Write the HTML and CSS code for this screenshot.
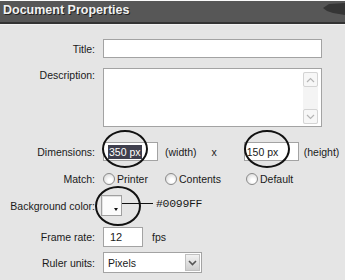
FILE: index.html
```html
<!DOCTYPE html>
<html lang="en">
<head>
    <meta charset="UTF-8" />
    <title>Document Properties</title>
    <link rel="stylesheet" href="styles.css">
</head>
<body>
    <div class="dialog">
        <div class="titlebar">
            <span class="titlebar-text">Document Properties</span>
            <svg class="pointer" width="22" height="14" viewBox="0 0 22 14">
                <path d="M0 6 L6 2 L22 1 L22 13 L10 11 L4 9 Z" fill="#353535" />
            </svg>
        </div>

        <div class="form">
            <!-- Title -->
            <div class="row row-title">
                <span class="label">Title:</span>
                <div class="field field-title"></div>
            </div>

            <!-- Description -->
            <div class="row row-desc">
                <span class="label label-top">Description:</span>
                <div class="field field-desc">
                    <div class="scrollbar">
                        <span class="scroll-btn">
                            <svg width="9" height="6" viewBox="0 0 9 6"><path d="M1 5 L4.5 1.5 L8 5" fill="none" stroke="#b5b5b5" stroke-width="1.2" /></svg>
                        </span>
                        <span class="scroll-track"></span>
                        <span class="scroll-btn">
                            <svg width="9" height="6" viewBox="0 0 9 6"><path d="M1 1 L4.5 4.5 L8 1" fill="none" stroke="#b5b5b5" stroke-width="1.2" /></svg>
                        </span>
                    </div>
                </div>
            </div>

            <!-- Dimensions -->
            <div class="row row-dims">
                <span class="label">Dimensions:</span>
                <div class="field field-dim">
                    <span class="selected">350 px</span>
                    <span class="ring ring-width"></span>
                </div>
                <span class="unit unit-width">(width)</span>
                <span class="times">x</span>
                <div class="field field-dim field-dim-2">
                    <span>150 px</span>
                    <span class="ring ring-height"></span>
                </div>
                <span class="unit unit-height">(height)</span>
            </div>

            <!-- Match -->
            <div class="row row-match">
                <span class="label">Match:</span>
                <div class="choices">
                    <span class="choice"><span class="radio"></span>Printer</span>
                    <span class="choice"><span class="radio"></span>Contents</span>
                    <span class="choice"><span class="radio"></span>Default</span>
                </div>
            </div>

            <!-- Background color -->
            <div class="row row-bg">
                <span class="label">Background color:</span>
                <div class="swatch">
                    <span class="swatch-arrow"></span>
                    <span class="ring ring-color"></span>
                </div>
                <span class="leader"></span>
                <span class="hex">#0099FF</span>
            </div>

            <!-- Frame rate -->
            <div class="row row-fps">
                <span class="label">Frame rate:</span>
                <div class="field field-fps">12</div>
                <span class="unit unit-fps">fps</span>
            </div>

            <!-- Ruler units -->
            <div class="row row-ruler">
                <span class="label">Ruler units:</span>
                <div class="field field-select">
                    <span class="select-value">Pixels</span>
                    <span class="select-btn">
                        <svg width="9" height="6" viewBox="0 0 9 6"><path d="M1 1 L4.5 4.5 L8 1" fill="none" stroke="#555" stroke-width="1.6" /></svg>
                    </span>
                </div>
            </div>
        </div>
    </div>
</body>
</html>
```

FILE: styles.css
```css
* {
    margin: 0;
    padding: 0;
    box-sizing: border-box;
}

body {
    background-color: #e5e5e5;
    color: #1a1a1a;
    font-family: "Liberation Sans", Arial, sans-serif;
    font-size: 10.5px;
    width: 345px;
    height: 280px;
    overflow: hidden;
}

.dialog {
    border-top: 1px solid #fafafa;
}

/* Title bar */

.titlebar {
    position: relative;
    height: 23px;
    background-color: #575757;
    border-bottom: 2px solid #333;
    box-shadow: 0 1px 0 #f2f2f2;
    padding: 2px 0 0 3px;
}

.titlebar-text {
    color: #f2f2f2;
    font-size: 12.5px;
    font-weight: bold;
    text-shadow: 1px 1px 0 #222;
}

.pointer {
    position: absolute;
    right: 0;
    top: 1px;
}

/* Form rows */

.form {
    display: flex;
    flex-direction: column;
    padding-top: 15px;
}

.row {
    display: flex;
    align-items: center;
}

.label {
    width: 95px;
    margin-right: 8px;
    text-align: right;
    flex-shrink: 0;
}

.label-top {
    align-self: flex-start;
    padding-top: 1px;
}

.row-title { height: 19px; }
.row-desc { height: 59px; margin-top: 10px; }
.row-dims { height: 19px; margin-top: 15px; }
.row-match { height: 13px; margin-top: 11px; }
.row-bg { height: 21px; margin-top: 10px; }
.row-fps { height: 20px; margin-top: 11px; }
.row-ruler { height: 21px; margin-top: 5px; }

.field {
    position: relative;
    height: 100%;
    background: #fff;
    border: 1px solid #a3a3a3;
    display: flex;
    align-items: center;
}

.field-title {
    width: 219px;
}

.field-desc {
    width: 219px;
    justify-content: flex-end;
    align-items: stretch;
    padding: 3px 3px 2px 0;
}

.scrollbar {
    width: 15px;
    display: flex;
    flex-direction: column;
    background: #f4f4f4;
}

.scroll-btn {
    height: 15px;
    border: 1px solid #d4d4d4;
    background: #f7f7f7;
    border-radius: 2px;
    display: flex;
    align-items: center;
    justify-content: center;
}

.scroll-track {
    flex: 1;
}

/* Dimensions */

.field-dim {
    width: 55px;
    padding-left: 4px;
}

.field-dim-2 {
    padding-left: 2px;
}

.selected {
    background: #3f3f4d;
    color: #fff;
    padding: 1px 1px;
}

.unit-width { margin-left: 7px; }
.times { margin-left: 15px; margin-right: 27px; }
.unit-height { margin-left: 5px; }

/* Annotation rings */

.ring {
    position: absolute;
    border: 2px solid #111;
    border-radius: 50%;
}

.ring-width {
    left: -2px;
    top: -13px;
    width: 46px;
    height: 38px;
}

.ring-height {
    left: -1px;
    top: -13px;
    width: 46px;
    height: 38px;
}

.ring-color {
    left: -7px;
    top: -10px;
    width: 46px;
    height: 40px;
}

/* Match radios */

.choices {
    display: grid;
    grid-template-columns: 62px 81px auto;
}

.choice {
    display: flex;
    align-items: center;
    gap: 2px;
}

.radio {
    width: 12px;
    height: 12px;
    border-radius: 50%;
    border: 1px solid #8a8a8a;
    background: radial-gradient(circle at 60% 65%, #fff 20%, #d6d6d6 90%);
}

/* Background color */

.swatch {
    position: relative;
    width: 21px;
    height: 21px;
    margin-left: -2px;
    border: 1px solid #a0a0a0;
    background: #fbfbfb;
    box-shadow: inset 1px 1px 0 #e2e2e2;
}

.swatch-arrow {
    position: absolute;
    right: 3px;
    bottom: 4px;
    border-left: 2.5px solid transparent;
    border-right: 2.5px solid transparent;
    border-top: 3px solid #111;
}

.leader {
    width: 31px;
    height: 1px;
    background: #111;
    align-self: flex-start;
    margin-top: 8px;
}

.hex {
    margin-left: 3px;
    align-self: flex-start;
    margin-top: 2px;
    font-family: "Liberation Mono", "Courier New", monospace;
    font-size: 11.5px;
    letter-spacing: -0.3px;
}

/* Frame rate */

.field-fps {
    width: 40px;
    padding-left: 6px;
    font-size: 11px;
}

.unit-fps { margin-left: 9px; }

/* Ruler units select */

.field-select {
    width: 99px;
    justify-content: space-between;
    padding: 1px 1px 1px 4px;
}

.select-btn {
    width: 15px;
    height: 100%;
    border: 1px solid #c0c0c0;
    background: linear-gradient(#f2f2f2, #cfcfcf);
    display: flex;
    align-items: center;
    justify-content: center;
}
```
